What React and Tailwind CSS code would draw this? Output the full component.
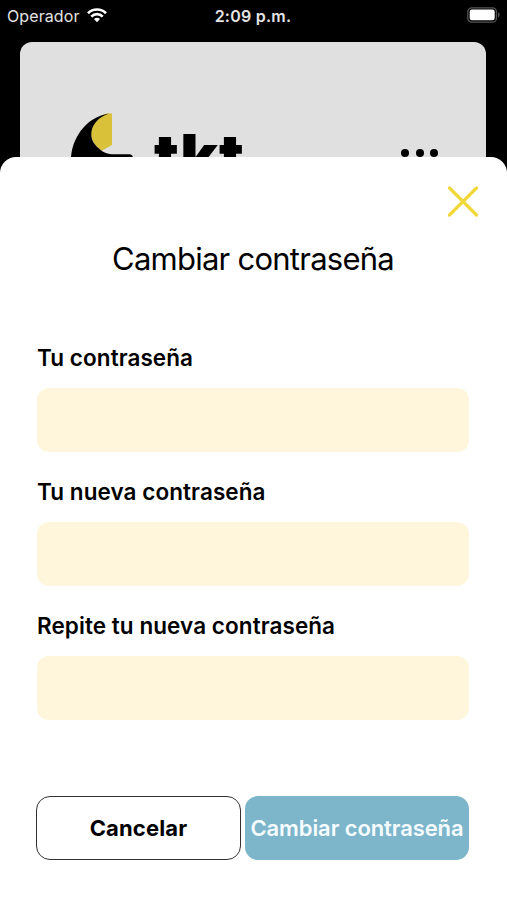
const fields = ['Tu contraseña', 'Tu nueva contraseña', 'Repite tu nueva contraseña'];

function StatusBar() {
  return (
    <header className="grid h-[42px] grid-cols-3 items-start text-[#e4e4e4]">
      <div className="flex items-center gap-[7px] pt-[4px] pl-[7px]">
        <span className="text-[16px] leading-[24px] tracking-[0.1px]">Operador</span>
        <svg className="-mt-[2px] h-[16px] w-[20px]" viewBox="0 0 20 16" fill="none" stroke="#fff" strokeWidth="2.7">
          <path d="M1 6.2a12.8 12.8 0 0 1 18 0" />
          <path d="M4.3 9.6a8 8 0 0 1 11.4 0" />
          <path d="M10 15.2l-3-3.1a4.3 4.3 0 0 1 6 0z" fill="#fff" stroke="none" />
        </svg>
      </div>
      <div className="pt-[4px] pr-px text-center text-[16px] leading-[24px] font-semibold tracking-[0.25px] whitespace-nowrap">2:09 p.m.</div>
      <div className="flex justify-end pt-[7px] pr-[7px]">
        <svg className="h-[16px] w-[33px]" viewBox="0 0 33 16">
          <rect x="0.8" y="0.8" width="28.6" height="14.4" rx="4" fill="none" stroke="#555" strokeWidth="1.3" />
          <rect x="2.7" y="2.5" width="25" height="10.7" rx="2.2" fill="#fff" />
          <path d="M31 5.2c2.2 1 2.2 4.2 0 5.2z" fill="#555" />
        </svg>
      </div>
    </header>
  );
}

function BackgroundCard() {
  return (
    <div className="mx-[20px] mr-[21px] flex h-[125px] items-start overflow-hidden rounded-t-[12px] bg-[#e0e0e0]">
      <svg className="mt-[70px] ml-[50px] h-[48px] w-[64px] shrink-0" viewBox="0 0 64 48">
        <path d="M42 1.5v31.5l-10 5.5C18 31 15 9 36 1.5z" fill="#d9c13a" />
        <path d="M1 48C1 28 15 5 39 1.5C22 7 17 23 25 32.5C30 38.5 36 42.3 42 42.3H60q2.5 .3 3 3v3z" fill="#000" />
      </svg>
      <span className="mt-[75px] ml-[20px] text-[62px] leading-[80px] font-black tracking-[1.2px] text-black">tkt</span>
      <div className="mt-[107px] mr-[48px] ml-auto flex gap-[6.5px]">
        <i className="size-[8px] rounded-full bg-black" />
        <i className="size-[8px] rounded-full bg-black" />
        <i className="size-[8px] rounded-full bg-black" />
      </div>
    </div>
  );
}

export default function App() {
  return (
    <div className="h-[900px] w-[507px] overflow-hidden bg-black font-[Inter,sans-serif] text-black">
      <StatusBar />
      <BackgroundCard />
      <main className="relative -mt-[10px] flex h-[743px] flex-col rounded-t-[16px] bg-white px-[37px]">
        <button aria-label="Cerrar" className="mt-[29px] -mr-[9px] h-[31px] w-[31px] self-end">
          <svg viewBox="0 0 31 31" className="size-[31px]" stroke="#f0d73a" strokeWidth="3.2" strokeLinecap="round">
            <path d="M1.5 2l27 27M28.5 2L1.5 29" />
          </svg>
        </button>
        <h1 className="mt-[22px] h-[40px] pr-px text-center text-[31px] leading-[40px] tracking-[-0.75px] whitespace-nowrap">Cambiar contraseña</h1>
        <form className="mt-[64px] flex flex-col gap-[25px]">
          {fields.map((label) => (
            <label key={label} className="flex h-[109px] flex-col">
              <span className="h-[45px] text-[22.5px] leading-[29px] font-semibold tracking-[0.07px] whitespace-nowrap">{label}</span>
              <input type="password" className="h-[64px] w-[432px] rounded-[12px] bg-[#fff6dc]" />
            </label>
          ))}
        </form>
        <div className="mt-[76px] flex h-[64px] gap-[4px] text-[22px] whitespace-nowrap">
          <button className="-ml-px w-[205px] rounded-[14px] border-[1.5px] border-[#333] font-bold tracking-[0.15px]">Cancelar</button>
          <button className="w-[224px] rounded-[13px] bg-[#7db5ca] font-semibold tracking-[-0.1px] text-[#f5fcff]">Cambiar contraseña</button>
        </div>
      </main>
    </div>
  );
}
